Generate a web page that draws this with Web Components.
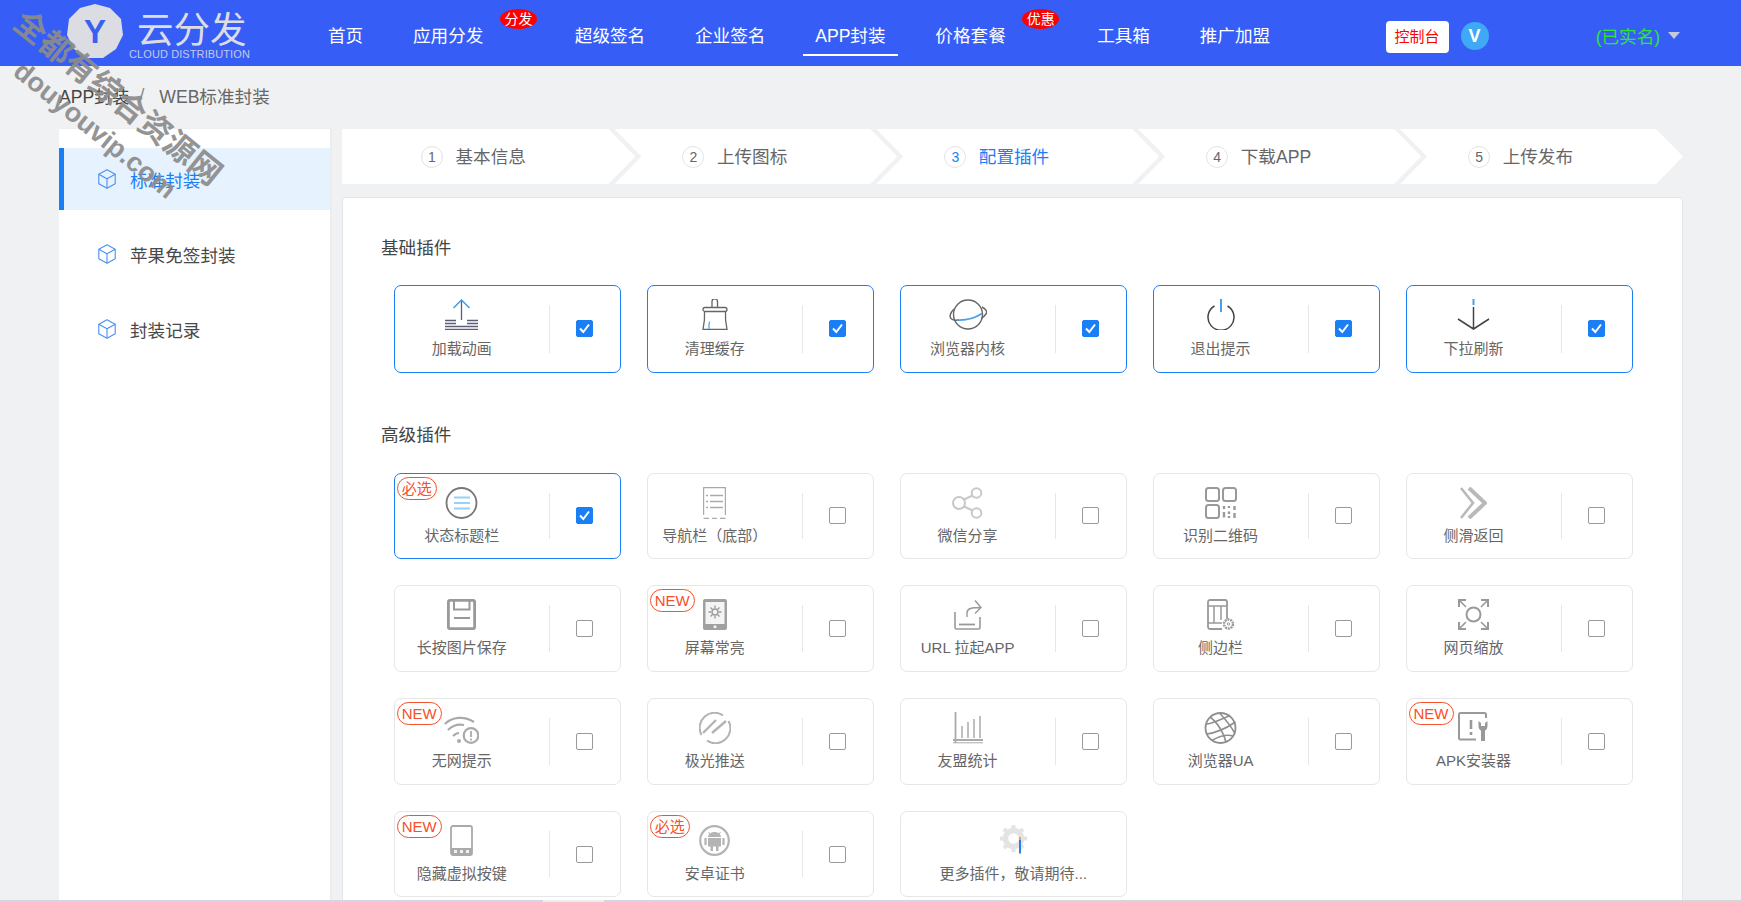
<!DOCTYPE html>
<html lang="zh">
<head>
<meta charset="utf-8">
<title>云分发 - WEB标准封装</title>
<style>
  html, body {
    margin: 0;
    height: 902px;
    overflow: hidden;
    background: #f0f1f3;
    font-family: "Liberation Sans", "Noto Sans CJK SC", sans-serif;
  }
</style>
</head>
<body>
<app-shell>
  <app-header slot="header">
    <nav-item>首页</nav-item>
    <nav-item badge="分发">应用分发</nav-item>
    <nav-item>超级签名</nav-item>
    <nav-item>企业签名</nav-item>
    <nav-item active>APP封装</nav-item>
    <nav-item badge="优惠">价格套餐</nav-item>
    <nav-item>工具箱</nav-item>
    <nav-item>推广加盟</nav-item>
  </app-header>

  <side-menu slot="side">
    <side-item active>标准封装</side-item>
    <side-item>苹果免签封装</side-item>
    <side-item>封装记录</side-item>
  </side-menu>

  <step-bar>
    <step-item num="1" first>基本信息</step-item>
    <step-item num="2">上传图标</step-item>
    <step-item num="3" active>配置插件</step-item>
    <step-item num="4">下载APP</step-item>
    <step-item num="5" last>上传发布</step-item>
  </step-bar>

  <plugin-panel>
    <plugin-group title="基础插件" basic>
      <plugin-card checked>
        <svg slot="icon" width="33" height="31" viewBox="0 0 33 31" fill="none" stroke="#5a5f78" stroke-width="1.3">
          <path d="M16.5 2V21M0 21.5H11M22 21.5H33M0 24.5H11M22 24.5H33M0 27.5H33M0 30.3H33"/>
          <path d="M8.5 9L16.5 1L24.5 9" stroke="#4a9eea" stroke-width="1.6"/>
        </svg>
        加载动画
      </plugin-card>
      <plugin-card checked>
        <svg slot="icon" width="26" height="31" viewBox="0 0 26 31" fill="none" stroke="#666" stroke-width="1.3">
          <path d="M10 8.5V2.5a2.5 2.5 0 0 1 5.5 0V8.5"/>
          <rect x="1" y="8.5" width="24" height="4" rx="2"/>
          <path d="M2.5 12.5C3 20 2 26 1 30.3H25C24 26 23 20 23.5 12.5"/>
          <path d="M7 30V25.5C7.5 24 7.5 23 7.5 22.5" stroke="#5aa8ee"/>
        </svg>
        清理缓存
      </plugin-card>
      <plugin-card checked>
        <svg slot="icon" width="38" height="31" viewBox="0 0 38 31" fill="none" stroke="#666" stroke-width="1.4">
          <circle cx="19" cy="15.5" r="14.5"/>
          <path d="M5 10C1 14 0 18 2.5 20C4 21.2 6 21.5 9 21M33 8C37 10 38.5 12.5 37 15C36 16.5 34.5 18 32.5 19.2"/>
          <path d="M8 21C16 21.5 26 19 33 14.5" stroke="#4a9eea" stroke-width="1.8"/>
        </svg>
        浏览器内核
      </plugin-card>
      <plugin-card checked>
        <svg slot="icon" width="30" height="31" viewBox="0 0 30 31" fill="none" stroke="#444" stroke-width="1.5">
          <path d="M8.5 7A13 13 0 1 0 21.5 7"/>
          <path d="M15 0V13" stroke="#4a9eea" stroke-width="2"/>
        </svg>
        退出提示
      </plugin-card>
      <plugin-card checked>
        <svg slot="icon" width="33" height="31" viewBox="0 0 33 31" fill="none" stroke="#444" stroke-width="1.5">
          <path d="M16.5 0V6" stroke="#4a9eea" stroke-width="2"/>
          <path d="M16.5 8V30M1 20L16.5 30L32 20"/>
        </svg>
        下拉刷新
      </plugin-card>
    </plugin-group>

    <plugin-group title="高级插件">
      <plugin-card checked tag="必选">
        <svg slot="icon" width="33" height="32" viewBox="0 0 33 32" fill="none">
          <circle cx="16.5" cy="16" r="15" stroke="#777" stroke-width="1.8"/>
          <path d="M9 10.5H25M9 16H25M9 21.5H25" stroke="#9ccff5" stroke-width="2"/>
        </svg>
        状态标题栏
      </plugin-card>
      <plugin-card>
        <svg slot="icon" width="23" height="32" viewBox="0 0 23 32" fill="none" stroke="#aaa" stroke-width="1.2">
          <path d="M.6 28V.6H22.4V28"/>
          <path d="M3 8.5H5M7 8.5H20M3 14.5H5M7 14.5H20M3 20.5H5M7 20.5H20" stroke-width="1.4"/>
          <path d="M.6 31.4H6M9 31.4H14M17 31.4H22.4" stroke-width="1.4"/>
        </svg>
        导航栏（底部）
      </plugin-card>
      <plugin-card>
        <svg slot="icon" width="31" height="32" viewBox="0 0 31 32" fill="none" stroke="#c8c8c8" stroke-width="2">
          <circle cx="24.5" cy="6" r="4.8"/>
          <circle cx="24.5" cy="26" r="4.8"/>
          <circle cx="7" cy="16" r="6"/>
          <path d="M12 12.5L20.5 8.5M12 19.5L20.5 23.5"/>
        </svg>
        微信分享
      </plugin-card>
      <plugin-card>
        <svg slot="icon" width="32" height="32" viewBox="0 0 32 32" fill="none" stroke="#999" stroke-width="2">
          <rect x="1" y="1" width="13" height="13" rx="2.5"/>
          <rect x="18" y="1" width="13" height="13" rx="2.5"/>
          <rect x="1" y="18" width="13" height="13" rx="2.5"/>
          <path d="M19 19V22M24 19V21M29.5 19V23M19 25V30.5M24 24.5V27M24 29V31M29.5 26V31" stroke-width="2.4"/>
        </svg>
        识别二维码
      </plugin-card>
      <plugin-card>
        <svg slot="icon" width="27" height="32" viewBox="0 0 27 32" fill="none" stroke="#b9b9b9" stroke-width="2.6">
          <path d="M1 1L13 16L1 31"/>
          <path d="M9 1L25 16L9 31" stroke-width="4"/>
        </svg>
        侧滑返回
      </plugin-card>
      <plugin-card>
        <svg slot="icon" width="29" height="31" viewBox="0 0 29 31" fill="none" stroke="#999" stroke-width="2.8">
          <rect x="1.4" y="1.4" width="26.2" height="28.2" rx="1.5"/>
          <path d="M7 1.5V10.5H22.5V1.5" stroke-width="2"/>
          <path d="M7 19H23" stroke-width="2"/>
        </svg>
        长按图片保存
      </plugin-card>
      <plugin-card tag="NEW">
        <svg slot="icon" width="24" height="31" viewBox="0 0 24 31">
          <rect x="0" y="0" width="24" height="31" rx="2" fill="#a0a0a0"/>
          <rect x="2.5" y="3" width="19" height="22" fill="#f4f4f4"/>
          <circle cx="12" cy="27.8" r="1.5" fill="#f4f4f4"/>
          <circle cx="12" cy="13" r="3" fill="none" stroke="#999" stroke-width="1.4"/>
          <path d="M12 6.5V9M12 17V19.5M5.5 13H8M16 13H18.5M7.5 8.5L9.3 10.3M14.7 15.7L16.5 17.5M7.5 17.5L9.3 15.7M14.7 10.3L16.5 8.5" stroke="#999" stroke-width="1.3"/>
        </svg>
        屏幕常亮
      </plugin-card>
      <plugin-card>
        <svg slot="icon" width="28" height="31" viewBox="0 0 28 31" fill="none" stroke="#999" stroke-width="1.6">
          <path d="M1 13V28.5a1.5 1.5 0 0 0 1.5 1.5H24.5a1.5 1.5 0 0 0 1.5-1.5V18"/>
          <path d="M5 25.5H21" stroke-width="1.8"/>
          <path d="M13 18V14C13 10 16 8.5 26 8.5M21 1.5L27 8.5L21 14.5" stroke-width="1.4"/>
        </svg>
        URL 拉起APP
      </plugin-card>
      <plugin-card>
        <svg slot="icon" width="28" height="31" viewBox="0 0 28 31" fill="none" stroke="#999" stroke-width="1.8">
          <path d="M15 30H3a2 2 0 0 1-2-2V3a2 2 0 0 1 2-2H18a2 2 0 0 1 2 2V20"/>
          <path d="M1 7H20M1 24H15M7 7V24M14 7V21" stroke-width="1.5"/>
          <circle cx="21.5" cy="25" r="4.5" stroke-width="2.4" stroke-dasharray="2 .8"/>
          <circle cx="21.5" cy="25" r="1.2" stroke-width="1"/>
        </svg>
        侧边栏
      </plugin-card>
      <plugin-card>
        <svg slot="icon" width="31" height="31" viewBox="0 0 31 31" fill="none" stroke="#999" stroke-width="2">
          <circle cx="15.5" cy="15.5" r="7"/>
          <path d="M1 8V1H8M23 1H30V8M1 23V30H8M23 30H30V23"/>
          <path d="M2 2L8 8M29 2L23 8M2 29L8 23M29 29L23 23" stroke-width="1.6"/>
        </svg>
        网页缩放
      </plugin-card>
      <plugin-card tag="NEW">
        <svg slot="icon" width="35" height="28" viewBox="0 0 35 28" fill="none" stroke="#aaa" stroke-width="2.2" style="margin-top:4px">
          <path d="M1 8C8 1 20 -.5 30 6"/>
          <path d="M4 14C9 9 15 8 20 9"/>
          <path d="M9 20C11 18 13 17 15 17"/>
          <circle cx="15" cy="25" r="2" fill="#aaa" stroke="none"/>
          <circle cx="27" cy="19.5" r="7.3"/>
          <path d="M27 15V21M27 22.5V24.5" stroke-width="1.8"/>
        </svg>
        无网提示
      </plugin-card>
      <plugin-card>
        <svg slot="icon" width="32" height="32" viewBox="0 0 32 32" fill="none" stroke="#b4b4b4" stroke-width="2">
          <path d="M2.5 23A15 15 0 0 1 24 3.3"/>
          <path d="M29.5 9A15 15 0 0 1 8 28.7"/>
          <path d="M4 21L17 8M13 21L27 9" stroke-width="2.4"/>
        </svg>
        极光推送
      </plugin-card>
      <plugin-card>
        <svg slot="icon" width="30" height="32" viewBox="0 0 30 32" fill="none" stroke="#aaa" stroke-width="1.5">
          <path d="M2.5 0V31M0 28H30" stroke-width="1.8"/>
          <path d="M0 30.8H30" stroke-width="1"/>
          <path d="M9 14V26M15 10V26M21 7V26M27 4V26"/>
        </svg>
        友盟统计
      </plugin-card>
      <plugin-card>
        <svg slot="icon" width="33" height="32" viewBox="0 0 33 32" fill="none" stroke="#8e8e8e" stroke-width="1.6">
          <circle cx="16.5" cy="16" r="15" stroke-width="1.8"/>
          <path d="M6 5C13 10 20 21 22 30M16 1.5C22 8 28 16 31 21.5M2 12C10 12 22 4 26 4M2.5 22C12 21 24 15 31.5 10M8 28.5C14 25 22 22 29 24"/>
        </svg>
        浏览器UA
      </plugin-card>
      <plugin-card tag="NEW">
        <svg slot="icon" width="32" height="30" viewBox="0 0 32 30" fill="none" stroke="#999" stroke-width="2">
          <path d="M28 6V2.5A1.5 1.5 0 0 0 26.5 1H2.5A1.5 1.5 0 0 0 1 2.5V26A1.5 1.5 0 0 0 2.5 27.5H18"/>
          <path d="M13 8V17M13 20V23" stroke-width="2.6"/>
          <path d="M20.5 9V14.5a5 5 0 0 0 2.5 4.2V29H27V18.7a5 5 0 0 0 2.5-4.2V9L27 11V14H23V11Z" fill="#999" stroke="none"/>
        </svg>
        APK安装器
      </plugin-card>
      <plugin-card tag="NEW">
        <svg slot="icon" width="23" height="31" viewBox="0 0 23 31">
          <rect x="1" y="1" width="21" height="29" rx="2" fill="#fff" stroke="#aaa" stroke-width="1.8"/>
          <path d="M1 23H22V28a2 2 0 0 1-2 2H3a2 2 0 0 1-2-2Z" fill="#aaa"/>
          <path d="M4 25H7V28H4ZM10 25H13V28H10ZM16 25H19V28H16Z" fill="#f2f2f2"/>
        </svg>
        隐藏虚拟按键
      </plugin-card>
      <plugin-card tag="必选">
        <svg slot="icon" width="31" height="31" viewBox="0 0 31 31" fill="none">
          <circle cx="15.5" cy="15.5" r="14.3" stroke="#b4b4b4" stroke-width="2.2"/>
          <path d="M9 12a6.5 5 0 0 1 13 0Z" fill="#b4b4b4"/>
          <path d="M9.5 7L11 9M21.5 7L20 9" stroke="#b4b4b4"/>
          <path d="M9 13H22V21.5H19.5V26H17V21.5H14V26H11.5V21.5H9Z" fill="#b4b4b4"/>
          <path d="M6.5 13V20M24.5 13V20" stroke="#b4b4b4" stroke-width="2.2"/>
        </svg>
        安卓证书
      </plugin-card>
      <plugin-card more>
        <svg slot="icon" width="27" height="29" viewBox="0 0 27 29" fill="none">
          <circle cx="13.5" cy="13.5" r="8" stroke="#e4e4e4" stroke-width="5.5"/>
          <path d="M13.5 0V4M13.5 23V27M0 13.5H4M23 13.5H27M4 4L7 7M20 20L23 23M4 23L7 20M20 7L23 4" stroke="#e4e4e4" stroke-width="4"/>
          <path d="M20 13V28.5" stroke="#2f7fe0" stroke-width="2"/>
          <path d="M20 12V15" stroke="#e8a050" stroke-width="2"/>
        </svg>
        更多插件，敬请期待...
      </plugin-card>
    </plugin-group>
  </plugin-panel>
</app-shell>

<script>
const baseFont = `"Liberation Sans", "Noto Sans CJK SC", sans-serif`
const activeBlue = '#1a7ef5'

customElements.define(
  'app-shell',
  class AppShell extends HTMLElement {
    constructor() {
      super()
      this.attachShadow({ mode: 'open' })
      this.shadowRoot.innerHTML = `
        <style>
          :host {
            display: block;
            position: relative;
            height: 902px;
            overflow: hidden;
            font-family: ${baseFont};
          }
          .crumbs {
            height: 63px;
            padding: 0 0 4px 59px;
            display: flex;
            align-items: center;
            box-sizing: border-box;
            font-size: 17.6px;
            color: #666;
          }
          .crumbs b { font-weight: normal; color: #444; }
          .crumbs i { font-style: normal; margin: 0 15px 0 10px; color: #888; }
          .main {
            display: grid;
            grid-template-columns: 271px 1341px;
            column-gap: 12px;
            padding-left: 59px;
            height: 773px;
          }
          .right {
            display: flex;
            flex-direction: column;
            row-gap: 13px;
            min-width: 0;
          }
          .mark {
            position: absolute;
            white-space: nowrap;
            font-weight: bold;
            color: #8c8c8c;
            opacity: 0.92;
            pointer-events: none;
            transform: translate(-50%, -50%) rotate(39deg);
          }
          .mark-cn { left: 118px; top: 98px; font-size: 32px; line-height: 36px; }
          .mark-en { left: 95px; top: 130px; font-size: 27px; line-height: 30px; }
          .strip {
            position: absolute;
            left: 0;
            right: 0;
            bottom: 0;
            height: 2px;
            background: linear-gradient(90deg, #d3d6e6 543px, #eeeeee 543px, #eeeeee 604px, #d3d6e6 604px, #d3d6e6 1000px, #d5d6dc 1000px);
          }
        </style>
        <slot name="header"></slot>
        <div class="crumbs"><b>APP封装</b><i>/</i>WEB标准封装</div>
        <div class="main">
          <slot name="side"></slot>
          <div class="right"><slot></slot></div>
        </div>
        <div class="mark mark-cn">全都有综合资源网</div>
        <div class="mark mark-en">douyouvip.com</div>
        <div class="strip"></div>
      `
    }
  }
)

customElements.define(
  'app-header',
  class AppHeader extends HTMLElement {
    constructor() {
      super()
      this.attachShadow({ mode: 'open' })
      this.shadowRoot.innerHTML = `
        <style>
          :host {
            display: flex;
            height: 66px;
            background: #365ef7;
            padding-left: 67px;
          }
          .brand {
            width: 248.5px;
            flex: none;
            display: flex;
          }
          .brand svg { margin-top: 4px; flex: none; }
          .name {
            margin-left: 6px;
            color: #dcdde3;
          }
          .name b {
            display: block;
            margin: 11px 0 0 8px;
            font-weight: normal;
            font-size: 36.5px;
            line-height: 40px;
          }
          .name small {
            display: block;
            margin-top: -3px;
            font-size: 11px;
            line-height: 12px;
            letter-spacing: 0.1px;
            color: #c3c9e6;
            white-space: nowrap;
          }
          .nav {
            display: flex;
            column-gap: 24.8px;
            align-items: flex-start;
          }
          .console {
            margin: 21px 0 0 103px;
            width: 63px;
            height: 32px;
            background: #fff;
            border-radius: 4px;
            color: #f00;
            font-size: 15px;
            line-height: 32px;
            text-align: center;
            flex: none;
          }
          .vip {
            margin: 22px 0 0 12px;
            width: 28px;
            height: 28px;
            border-radius: 50%;
            background: #3fa9f5;
            color: #fff;
            font-weight: bold;
            font-size: 18px;
            line-height: 28px;
            text-align: center;
            flex: none;
          }
          .user {
            margin: 25px 0 0 107px;
            font-size: 17.6px;
            line-height: 24px;
            color: #2fe52f;
            white-space: nowrap;
          }
          .caret {
            margin: 32px 0 0 8px;
            width: 0;
            height: 0;
            border: solid transparent;
            border-width: 7.5px 6.5px 0;
            border-top-color: #c5c9da;
          }
        </style>
        <div class="brand">
          <svg width="56" height="55" viewBox="0 0 56 55">
            <polygon points="28,0 43,4 54,15 56,31 49,45 36,54 20,54 7,45 0,31 2,15 13,4" fill="#dcdde3"/>
            <text x="28" y="39" text-anchor="middle" font-family="Liberation Sans" font-weight="bold" font-size="33" fill="#3a60f0">Y</text>
          </svg>
          <div class="name"><b>云分发</b><small>CLOUD DISTRIBUTION</small></div>
        </div>
        <div class="nav"><slot></slot></div>
        <div class="console">控制台</div>
        <div class="vip">V</div>
        <div class="user">(已实名)</div>
        <div class="caret"></div>
      `
    }
  }
)

customElements.define(
  'nav-item',
  class NavItem extends HTMLElement {
    constructor() {
      super()
      const badge = this.getAttribute('badge')
      this.attachShadow({ mode: 'open' })
      this.shadowRoot.innerHTML = `
        <style>
          :host {
            display: block;
            position: relative;
            margin-top: 24px;
            height: 30px;
            padding: 0 12.5px;
            border-bottom: 2px solid transparent;
            color: #fff;
            font-size: 17.6px;
            line-height: 24px;
            white-space: nowrap;
          }
          :host([active]) { border-bottom-color: #fff; }
          :host([badge]) { margin-right: 41.6px; }
          .badge {
            position: absolute;
            left: 99.5px;
            top: -15px;
            width: 37px;
            height: 20px;
            border-radius: 50%;
            background: #f00;
            font-size: 14px;
            line-height: 20px;
            text-align: center;
          }
        </style>
        <slot></slot>
        ${badge ? `<span class="badge">${badge}</span>` : ''}
      `
    }
  }
)

customElements.define(
  'side-menu',
  class SideMenu extends HTMLElement {
    constructor() {
      super()
      this.attachShadow({ mode: 'open' })
      this.shadowRoot.innerHTML = `
        <style>
          :host {
            display: flex;
            flex-direction: column;
            row-gap: 13px;
            padding-top: 19px;
            background: #fff;
            box-shadow: 1px 0 2px rgba(0, 0, 0, 0.04);
          }
        </style>
        <slot></slot>
      `
    }
  }
)

customElements.define(
  'side-item',
  class SideItem extends HTMLElement {
    constructor() {
      super()
      this.attachShadow({ mode: 'open' })
      this.shadowRoot.innerHTML = `
        <style>
          :host {
            display: flex;
            align-items: center;
            height: 62px;
            padding-left: 39px;
            color: #484848;
            font-size: 17.6px;
          }
          :host([active]) {
            padding-left: 34px;
            border-left: 5px solid ${activeBlue};
            background: #e6f2fe;
            color: ${activeBlue};
          }
          svg { margin-right: 14px; flex: none; }
        </style>
        <svg width="18" height="20" viewBox="0 0 18 20" fill="none" stroke="#4a90f0" stroke-width="1.1" stroke-linejoin="round">
          <path d="M9 .8L17.2 5.3V14.7L9 19.2L.8 14.7V5.3Z"/>
          <path d="M.8 5.3L9 9.8L17.2 5.3M9 9.8V19.2"/>
        </svg>
        <slot></slot>
      `
    }
  }
)

customElements.define(
  'step-bar',
  class StepBar extends HTMLElement {
    constructor() {
      super()
      this.attachShadow({ mode: 'open' })
      this.shadowRoot.innerHTML = `
        <style>
          :host {
            display: flex;
            height: 55px;
            flex: none;
          }
        </style>
        <slot></slot>
      `
    }
  }
)

customElements.define(
  'step-item',
  class StepItem extends HTMLElement {
    constructor() {
      super()
      this.attachShadow({ mode: 'open' })
      this.shadowRoot.innerHTML = `
        <style>
          :host {
            display: flex;
            align-items: center;
            width: 283px;
            margin-left: -21px;
            padding-left: 68px;
            box-sizing: border-box;
            background: #fff;
            color: #666;
            font-size: 17.6px;
            clip-path: polygon(0 0, calc(100% - 27px) 0, 100% 50%, calc(100% - 27px) 100%, 0 100%, 27px 50%);
          }
          :host([first]) {
            width: 293.5px;
            margin-left: 0;
            padding-left: 79px;
            clip-path: polygon(0 0, calc(100% - 27px) 0, 100% 50%, calc(100% - 27px) 100%, 0 100%);
          }
          :host([active]) { color: ${activeBlue}; }
          .num {
            width: 22px;
            height: 22px;
            box-sizing: border-box;
            margin-right: 12.5px;
            border: 1px solid #e3e3e3;
            border-radius: 50%;
            font-size: 14px;
            line-height: 20px;
            text-align: center;
          }
          .text { margin-top: -3px; }
        </style>
        <span class="num">${this.getAttribute('num')}</span>
        <span class="text"><slot></slot></span>
      `
    }
  }
)

customElements.define(
  'plugin-panel',
  class PluginPanel extends HTMLElement {
    constructor() {
      super()
      this.attachShadow({ mode: 'open' })
      this.shadowRoot.innerHTML = `
        <style>
          :host {
            display: block;
            flex: 1;
            background: #fff;
            border: 1px solid #e4e5e8;
            border-radius: 4px;
            padding: 38px 49px 0 38px;
          }
        </style>
        <slot></slot>
      `
    }
  }
)

customElements.define(
  'plugin-group',
  class PluginGroup extends HTMLElement {
    constructor() {
      super()
      this.attachShadow({ mode: 'open' })
      this.shadowRoot.innerHTML = `
        <style>
          :host {
            display: block;
            margin-bottom: 50px;
            --card-height: 86.5px;
            --label-gap: 7px;
          }
          :host([basic]) {
            --card-height: 87.5px;
            --label-gap: 8px;
          }
          h3 {
            margin: 0 0 26px;
            font-weight: normal;
            font-size: 17.6px;
            line-height: 24px;
            color: #444;
          }
          :host([basic]) h3 { margin-bottom: 25px; }
          .grid {
            display: grid;
            grid-template-columns: repeat(5, 1fr);
            column-gap: 25.5px;
            row-gap: 26.3px;
            padding-left: 12.7px;
          }
        </style>
        <h3>${this.getAttribute('title')}</h3>
        <div class="grid"><slot></slot></div>
      `
    }
  }
)

customElements.define(
  'plugin-card',
  class PluginCard extends HTMLElement {
    constructor() {
      super()
      const tag = this.getAttribute('tag')
      this.attachShadow({ mode: 'open' })
      this.shadowRoot.innerHTML = `
        <style>
          :host {
            display: flex;
            position: relative;
            box-sizing: border-box;
            height: var(--card-height);
            border: 1px solid #e6e6e6;
            border-radius: 7px;
            background: #fff;
            color: #666;
            font-size: 15px;
          }
          :host([checked]) { border-color: ${activeBlue}; }
          .main {
            width: 134px;
            margin-right: 20px;
            padding-top: 13px;
            flex: none;
            display: flex;
            flex-direction: column;
            align-items: center;
            box-sizing: border-box;
          }
          :host([more]) .main { width: 100%; margin-right: 0; }
          .icon {
            height: 32px;
            display: flex;
            align-items: flex-start;
            justify-content: center;
          }
          .label {
            margin-top: var(--label-gap);
            line-height: 20px;
            white-space: nowrap;
          }
          .side {
            flex: 1;
            margin: 19px 0;
            border-left: 1px solid #e6e6e6;
            display: flex;
            align-items: center;
            justify-content: center;
          }
          :host([more]) .side { display: none; }
          .box {
            width: 17px;
            height: 17px;
            box-sizing: border-box;
            border: 1px solid #999;
            border-radius: 2px;
            background: #fff;
            display: flex;
          }
          :host([checked]) .box {
            background: ${activeBlue};
            border-color: ${activeBlue};
          }
          .box svg { display: none; }
          :host([checked]) .box svg { display: block; }
          .tag {
            position: absolute;
            left: 2px;
            top: 3px;
            height: 23px;
            box-sizing: border-box;
            padding: 0 4px;
            border: 1px solid #f4502a;
            border-radius: 12px;
            background: #fff;
            color: #f4502a;
            font-size: 15px;
            line-height: 21px;
            white-space: nowrap;
          }
        </style>
        <div class="main">
          <div class="icon"><slot name="icon"></slot></div>
          <div class="label"><slot></slot></div>
        </div>
        <div class="side">
          <span class="box">
            <svg width="15" height="15" viewBox="0 0 15 15" fill="none" stroke="#fff" stroke-width="2"><path d="M3 7.5L6.3 11L12 3.5"/></svg>
          </span>
        </div>
        ${tag ? `<span class="tag">${tag}</span>` : ''}
      `
    }
  }
)
</script>
</body>
</html>
